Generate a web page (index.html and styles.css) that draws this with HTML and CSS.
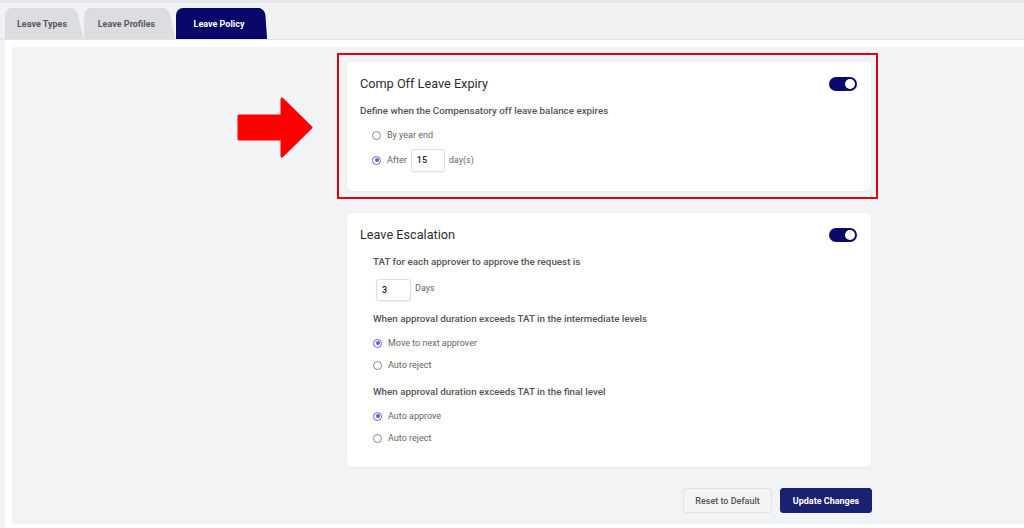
FILE: index.html
```html
<!DOCTYPE html>
<html lang="en">
<head>
<meta charset="utf-8">
<title>Leave Policy</title>
<link rel="stylesheet" href="styles.css">
</head>
<body>
<div class="topbar">
  <div class="tabs">
    <div class="tab t1">Leave Types</div>
    <div class="tab t2">Leave Profiles</div>
    <div class="tab t3 active">Leave Policy</div>
  </div>
</div>
<div class="frame">
  <div class="panel">
    <svg class="arrow" width="78" height="62" viewBox="0 0 78 62">
      <g fill="#f00" stroke="#f00" stroke-width="3" stroke-linejoin="round">
        <rect x="2" y="19" width="46" height="23"/>
        <polygon points="45,2 74,30.5 45,59"/>
      </g>
    </svg>
    <div class="content">
      <div class="highlight">
        <section class="card card1">
          <div class="card-head">
            <h2>Comp Off Leave Expiry</h2>
            <span class="toggle"><span class="knob"></span></span>
          </div>
          <p class="label">Define when the Compensatory off leave balance expires</p>
          <div class="options">
            <label class="opt"><span class="radio"></span>By year end</label>
            <label class="opt opt-after"><span class="radio on"></span>After <span class="field f15">15</span> day(s)</label>
          </div>
        </section>
      </div>
      <section class="card card2">
        <div class="card-head">
          <h2>Leave Escalation</h2>
          <span class="toggle"><span class="knob"></span></span>
        </div>
        <div class="body2">
          <p class="label">TAT for each approver to approve the request is</p>
          <div class="tat"><span class="field f3">3</span><span class="unit">Days</span></div>
          <p class="label l2">When approval duration exceeds TAT in the intermediate levels</p>
          <label class="opt"><span class="radio on"></span>Move to next approver</label>
          <label class="opt"><span class="radio"></span>Auto reject</label>
          <p class="label l3">When approval duration exceeds TAT in the final level</p>
          <label class="opt"><span class="radio on"></span>Auto approve</label>
          <label class="opt"><span class="radio"></span>Auto reject</label>
        </div>
      </section>
      <div class="actions">
        <button class="btn reset">Reset to Default</button>
        <button class="btn update">Update Changes</button>
      </div>
    </div>
  </div>
</div>
</body>
</html>
```
FILE: styles.css
```css
* { box-sizing: border-box; }
html, body { margin: 0; padding: 0; }
body {
  width: 1024px;
  height: 528px;
  overflow: hidden;
  background: #f1f2f4;
  font-family: Roboto, "Liberation Sans", Arial, sans-serif;
  color: #555;
}
.topbar {
  height: 40px;
  border-top: 3px solid #e6e7e9;
  border-bottom: 1px solid #e2e3e5;
  padding-left: 8px;
  display: flex;
  align-items: flex-end;
}
.tabs { display: flex; align-items: flex-end; height: 100%; }
.tab {
  position: relative;
  height: 31px;
  margin-right: 9px;
  background: #dcdde0;
  border-radius: 7px 4px 0 0;
  font-size: 9px;
  font-weight: 700;
  color: #5a5a5a;
  display: flex;
  align-items: center;
  justify-content: center;
  z-index: 1;
}
.tab::after {
  content: "";
  position: absolute;
  top: 0;
  right: -5px;
  width: 12px;
  height: 100%;
  background: inherit;
  border-top-right-radius: 7px;
  transform: skewX(12deg);
  z-index: -1;
}
.t1 { width: 70px; margin-left: -3px; padding-left: 4px; }
.t2 { width: 83px; padding-left: 2px; }
.t3 { width: 86px; }
.tab.active { background: #07076a; color: #fff; }
.tab.active::after { transform: skewX(4deg); right: -4px; }

.frame {
  background: #fff;
  margin-left: 5px;
  padding: 7px 0 4px 7px;
  height: 488px;
}
.panel {
  position: relative;
  background: #f2f3f5;
  height: 100%;
  padding: 6px 0 0 325px;
}
.arrow { position: absolute; left: 225px; top: 50px; }
.content { width: 541px; }
.highlight {
  border: 2px solid #e4000f;
  padding: 7px 5px 6px 8px;
  height: 146px;
}
.card {
  background: #fff;
  border-radius: 5px;
  box-shadow: 0 1px 2px rgba(0,0,0,0.06);
  width: 524px;
}
.card1 { height: 129px; padding: 14px 14px 0 13px; }
.card2 { margin: 14px 0 0 10px; height: 254px; padding: 14px 14px 0 13px; }
.card-head {
  display: flex;
  justify-content: space-between;
  align-items: center;
  height: 16px;
}
h2 {
  margin: 0;
  font-size: 12.7px;
  font-weight: 400;
  color: #2e2e2e;
  line-height: 16px;
}
.toggle {
  width: 28px;
  height: 14px;
  border-radius: 7px;
  background: #0a0a6c;
  position: relative;
  margin-top: -1px;
}
.knob {
  position: absolute;
  right: 2px;
  top: 2px;
  width: 10px;
  height: 10px;
  border-radius: 50%;
  background: #fff;
}
.label {
  margin: 0;
  font-size: 9.8px;
  font-weight: 500;
  color: #555;
  line-height: 14px;
}
.card1 .label { margin-top: 12px; }
.options { padding-left: 12px; margin-top: 5px; }
.opt {
  display: flex;
  align-items: center;
  height: 24px;
  font-size: 9px;
  color: #666;
}
.opt-after { height: 26px; }
.radio {
  width: 9px;
  height: 9px;
  border: 1px solid #8a8a8a;
  border-radius: 50%;
  margin-right: 6px;
  position: relative;
  flex: none;
}
.radio.on { border-color: #7060d8; }
.radio.on::after {
  content: "";
  position: absolute;
  left: 1.5px; top: 1.5px;
  width: 4px; height: 4px;
  border-radius: 50%;
  background: #6a56d6;
}
.field {
  display: inline-flex;
  align-items: center;
  background: #fff;
  border: 1px solid #dedede;
  border-radius: 3px;
  box-shadow: 0 1px 2px rgba(0,0,0,0.05);
  font-size: 9px;
  font-weight: 500;
  color: #222;
  padding-left: 5px;
}
.f15 { width: 34px; height: 23px; margin: 0 4px 0 4px; }
.f3 { width: 35px; height: 22px; }
.body2 { padding-left: 13px; margin-top: 12px; }
.tat { display: flex; align-items: center; margin: 10px 0 0 3px; }
.unit { font-size: 9px; color: #666; margin-left: 4px; margin-top: -4px; }
.l2 { margin-top: 11px; margin-bottom: 6px; }
.l3 { margin-top: 9px; margin-bottom: 6px; }
.body2 .opt { height: 22px; }

.actions {
  display: flex;
  justify-content: flex-end;
  gap: 8px;
  margin-top: 21px;
  padding-right: 6px;
}
.btn {
  height: 25px;
  border-radius: 3px;
  font-family: inherit;
  font-size: 9px;
  padding: 0;
  cursor: pointer;
}
.reset {
  width: 89px;
  background: #f4f4f4;
  border: 1px solid #e2e2e2;
  color: #555;
  font-weight: 500;
}
.update {
  width: 92px;
  background: #1a226f;
  border: 1px solid #1a226f;
  color: #fff;
  font-weight: 700;
}
```
